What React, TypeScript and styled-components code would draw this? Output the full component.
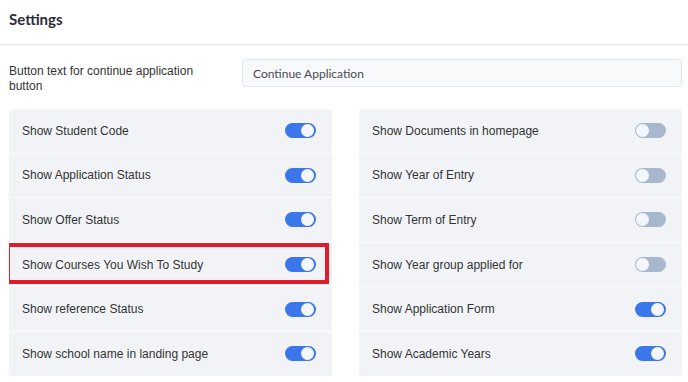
import React, { useState } from "react";
import styled, { createGlobalStyle } from "styled-components";

const GlobalStyle = createGlobalStyle`
  html, body {
    margin: 0;
    padding: 0;
    background: #ffffff;
  }
  body {
    font-family: "Liberation Sans", Arial, sans-serif;
    color: #333;
  }
`;

const Page = styled.div`
  width: 688px;
  height: 382px;
  overflow: hidden;
  background: #fff;
`;

const Header = styled.header`
  height: 45px;
  box-sizing: border-box;
  padding: 10px 9px 0;
  border-bottom: 1px solid #dfe4e8;
  h1 {
    margin: 0;
    font-family: Lato, "Open Sans", sans-serif;
    font-weight: 700;
    font-size: 15px;
    color: #2b2b36;
    line-height: 18px;
  }
`;

const FieldRow = styled.div`
  display: flex;
  align-items: flex-start;
  padding: 14px 6px 0 9px;
  height: 64px;
  box-sizing: border-box;
`;

const FieldLabel = styled.label`
  width: 233px;
  padding: 5px 30px 0 0;
  box-sizing: border-box;
  font-size: 12px;
  line-height: 15px;
  color: #333;
`;

const TextInput = styled.input`
  flex: 1;
  height: 28px;
  box-sizing: border-box;
  border: 1px solid #e2e6ea;
  border-radius: 4px;
  background: #f8f9fb;
  padding: 0 10px;
  font-family: Lato, "Open Sans", sans-serif;
  font-size: 12px;
  color: #4a4a55;
  outline: none;
`;

const Columns = styled.div`
  display: grid;
  grid-template-columns: 323px 323px;
  column-gap: 27px;
  padding: 0 6px 0 9px;
`;

const Card = styled.div`
  display: flex;
  flex-direction: column;
  gap: 1px;
  background: #fff;
  border-radius: 4px;
  overflow: hidden;
`;

const Row = styled.div`
  position: relative;
  height: 43.6px;
  display: flex;
  align-items: center;
  justify-content: space-between;
  padding: 0 16px 0 13px;
  background: #f2f3f7;
  font-size: 12px;
  color: #333;
`;

const Highlight = styled.div`
  position: absolute;
  left: -3px;
  right: 3px;
  top: 0;
  bottom: 2px;
  border: 4px solid #e3192c;
  pointer-events: none;
`;

const Track = styled.button<{ $on: boolean }>`
  position: relative;
  width: 31px;
  height: 15px;
  border: none;
  padding: 0;
  border-radius: 8px;
  background: ${(p) => (p.$on ? "#3b76ea" : "#a8b8cc")};
  cursor: pointer;
  &::after {
    content: "";
    position: absolute;
    top: 1px;
    left: ${(p) => (p.$on ? "16px" : "1px")};
    width: 13px;
    height: 13px;
    border-radius: 50%;
    background: #f3f6fc;
  }
`;

type Item = { label: string; on: boolean; marked?: boolean };

const leftItems: Item[] = [
  { label: "Show Student Code", on: true },
  { label: "Show Application Status", on: true },
  { label: "Show Offer Status", on: true },
  { label: "Show Courses You Wish To Study", on: true, marked: true },
  { label: "Show reference Status", on: true },
  { label: "Show school name in landing page", on: true },
];

const rightItems: Item[] = [
  { label: "Show Documents in homepage", on: false },
  { label: "Show Year of Entry", on: false },
  { label: "Show Term of Entry", on: false },
  { label: "Show Year group applied for", on: false },
  { label: "Show Application Form", on: true },
  { label: "Show Academic Years", on: true },
];

function ToggleList(props: { items: Item[] }) {
  const [items, setItems] = useState<Item[]>(props.items);
  const toggle = (i: number) => {
    setItems(items.map((it, idx) => (idx === i ? { ...it, on: !it.on } : it)));
  };
  return (
    <Card>
      {items.map((it, i) => (
        <Row key={it.label}>
          <span>{it.label}</span>
          <Track $on={it.on} onClick={() => toggle(i)} aria-label={it.label} />
          {it.marked ? <Highlight /> : null}
        </Row>
      ))}
    </Card>
  );
}

export default function App() {
  const [text, setText] = useState("Continue Application");
  return (
    <Page>
      <GlobalStyle />
      <Header>
        <h1>Settings</h1>
      </Header>
      <FieldRow>
        <FieldLabel>Button text for continue application button</FieldLabel>
        <TextInput value={text} onChange={(e) => setText(e.target.value)} />
      </FieldRow>
      <Columns>
        <ToggleList items={leftItems} />
        <ToggleList items={rightItems} />
      </Columns>
    </Page>
  );
}
